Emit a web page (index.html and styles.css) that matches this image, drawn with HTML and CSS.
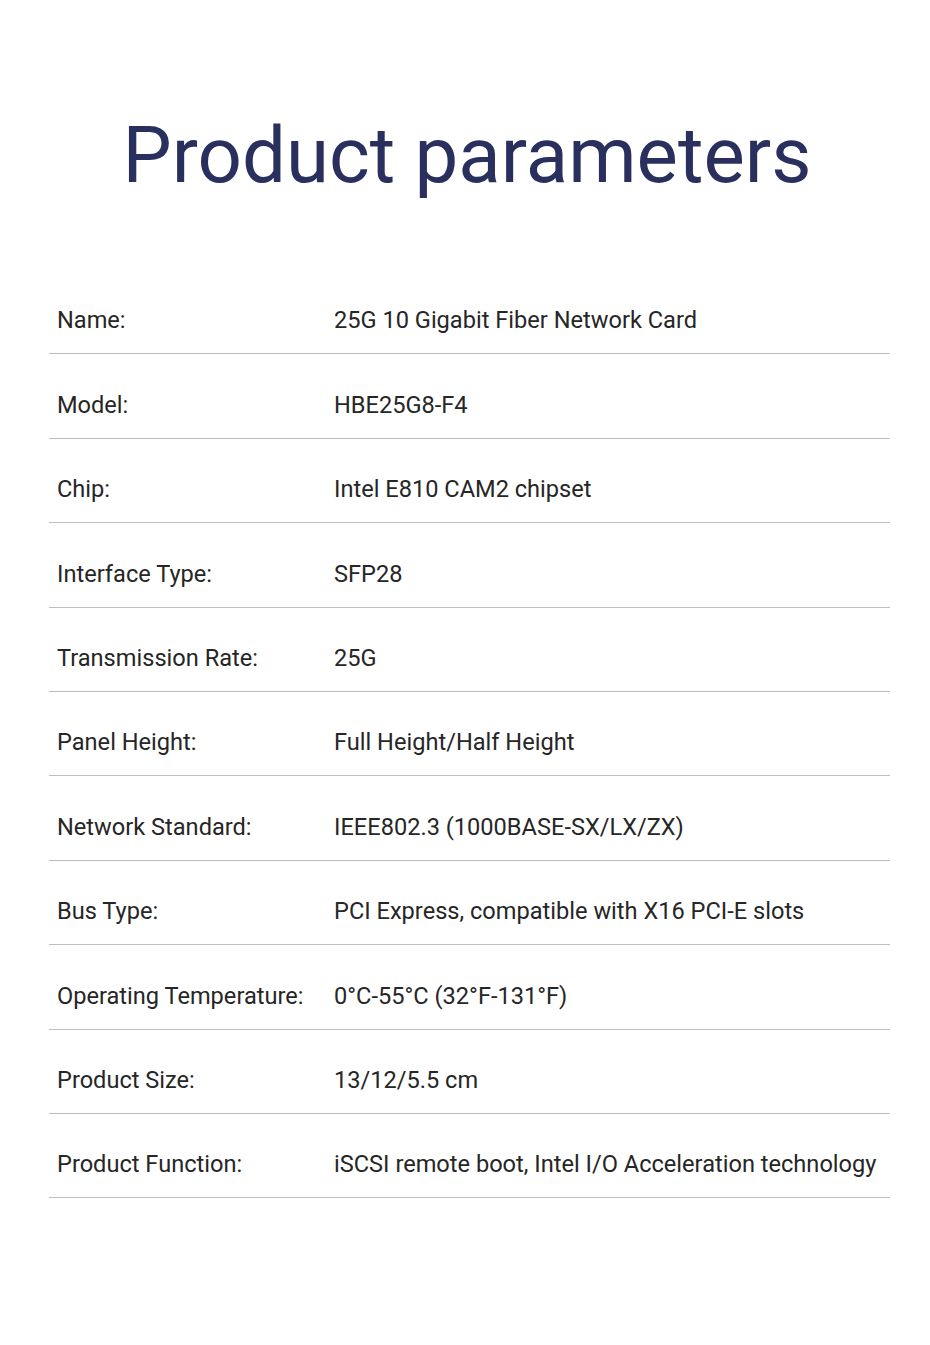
FILE: index.html
```html
<!DOCTYPE html>
<html>
<head>
<meta charset="utf-8">
<link rel="stylesheet" href="styles.css">
</head>
<body>
<div class="page">
  <h1 class="title">Product parameters</h1>
  <div class="table">
    <div class="row"><div class="label">Name:</div><div class="value">25G 10 Gigabit Fiber Network Card</div></div>
    <div class="row"><div class="label">Model:</div><div class="value">HBE25G8-F4</div></div>
    <div class="row"><div class="label">Chip:</div><div class="value">Intel E810 CAM2 chipset</div></div>
    <div class="row"><div class="label">Interface Type:</div><div class="value">SFP28</div></div>
    <div class="row"><div class="label">Transmission Rate:</div><div class="value">25G</div></div>
    <div class="row"><div class="label">Panel Height:</div><div class="value">Full Height/Half Height</div></div>
    <div class="row"><div class="label">Network Standard:</div><div class="value">IEEE802.3 (1000BASE-SX/LX/ZX)</div></div>
    <div class="row"><div class="label">Bus Type:</div><div class="value">PCI Express, compatible with X16 PCI-E slots</div></div>
    <div class="row"><div class="label">Operating Temperature:</div><div class="value">0°C-55°C (32°F-131°F)</div></div>
    <div class="row"><div class="label">Product Size:</div><div class="value">13/12/5.5 cm</div></div>
    <div class="row"><div class="label">Product Function:</div><div class="value">iSCSI remote boot, Intel I/O Acceleration technology</div></div>
  </div>
</div>
</body>
</html>
```
FILE: styles.css
```css
html, body {
  margin: 0;
  padding: 0;
  background: #ffffff;
}
.page {
  width: 930px;
  height: 1345px;
  display: flex;
  flex-direction: column;
  font-family: Roboto, "Liberation Sans", sans-serif;
}
.title {
  margin: 108px 0 0 0;
  text-align: center;
  font-size: 78px;
  line-height: 96px;
  font-weight: 400;
  color: #29305e;
  padding-left: 4px;
}
.table {
  margin: 66px 0 0 49px;
  width: 841px;
  display: flex;
  flex-direction: column;
}
.row {
  height: 84.4px;
  box-sizing: border-box;
  border-bottom: 1px solid #bdbdbd;
  display: flex;
  align-items: flex-end;
  padding: 0 0 18px 8px;
  font-size: 23.6px;
  line-height: 30px;
  color: #262626;
}
.label {
  width: 277px;
  flex: none;
}
.value {
  flex: 1;
  white-space: nowrap;
}
```
